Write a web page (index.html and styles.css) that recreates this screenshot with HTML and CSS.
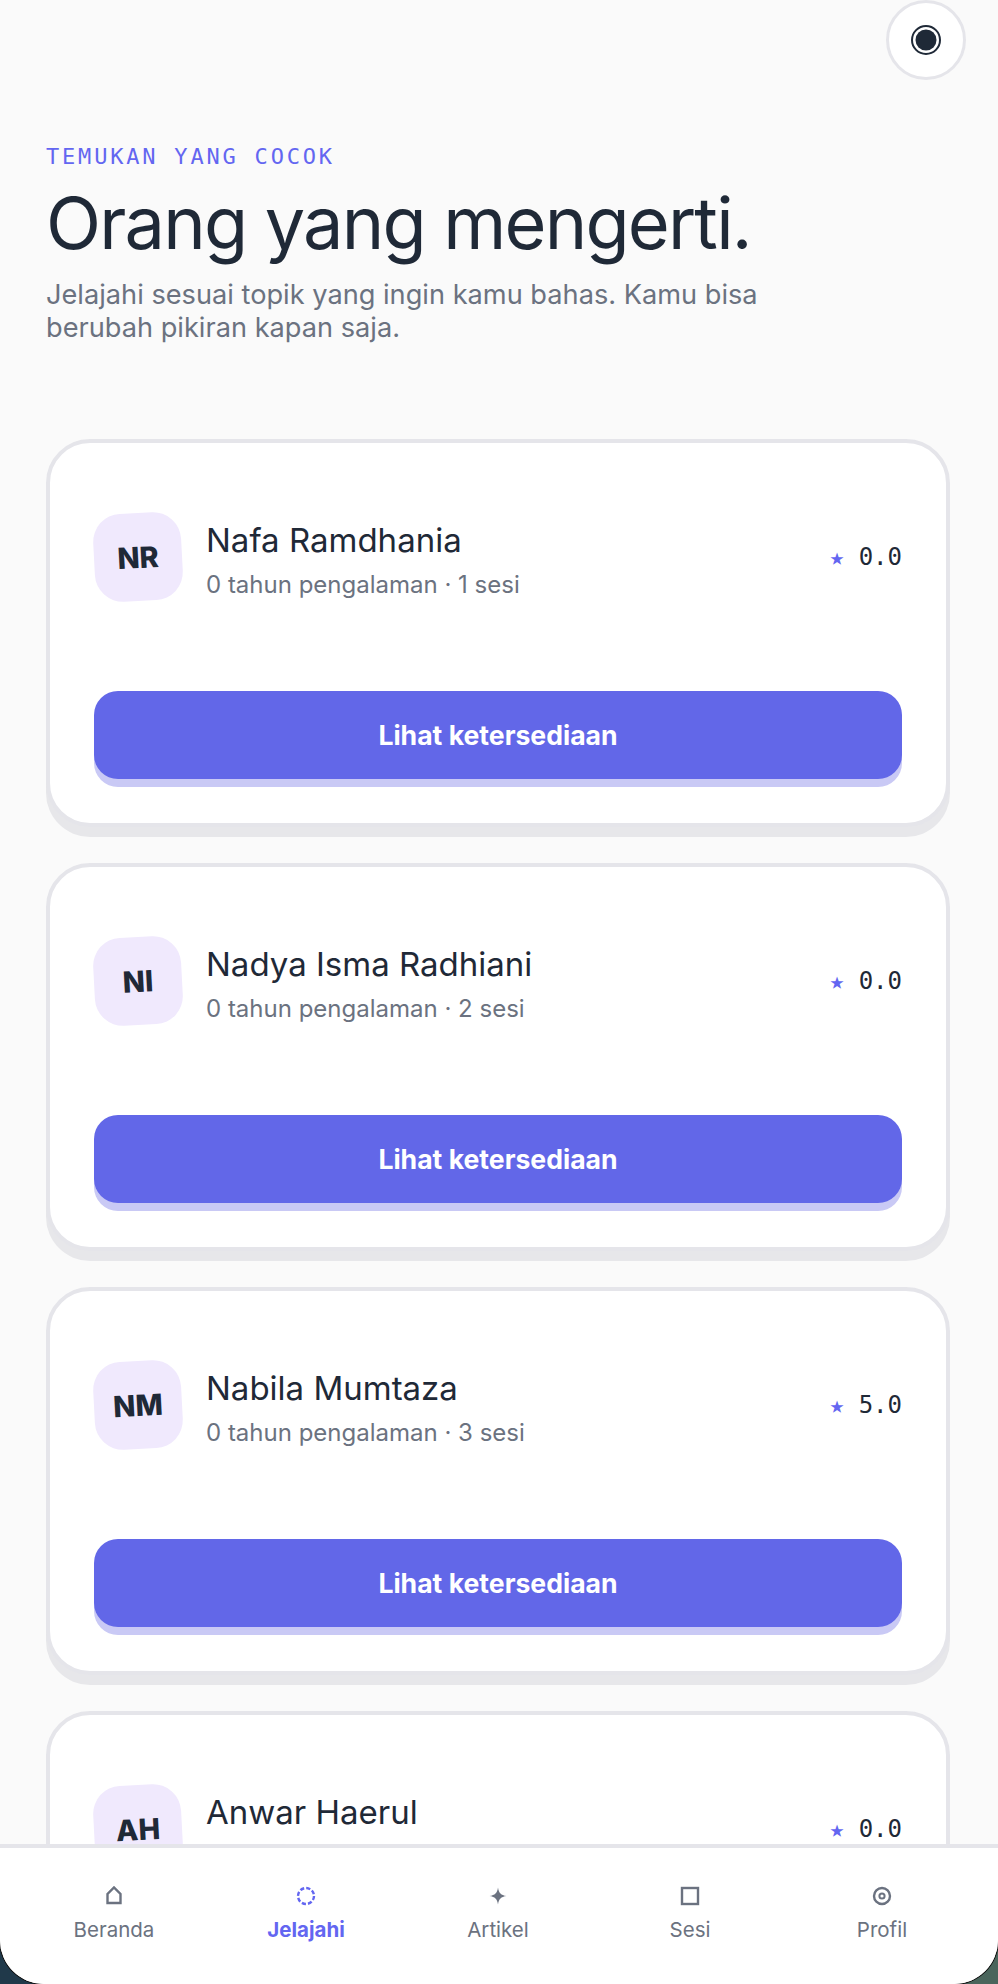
FILE: index.html

```html
<!DOCTYPE html>
<html lang="id">
<head>
  <meta charset="UTF-8">
  <meta name="viewport" content="width=device-width, initial-scale=1.0">
  <title>Jelajahi</title>
  <link rel="stylesheet" href="styles.css">
</head>
<body>
  <div class="screen">
    <button class="theme-btn" aria-label="Tema">
      <svg width="30" height="30" viewBox="0 0 30 30">
        <circle cx="15" cy="15" r="14" fill="none" stroke="#1f2937" stroke-width="2"></circle>
        <circle cx="15" cy="15" r="10.5" fill="#1f2937"></circle>
      </svg>
    </button>

    <main class="content">
      <header class="intro">
        <p class="eyebrow">TEMUKAN YANG COCOK</p>
        <h1>Orang yang mengerti.</h1>
        <p class="lead">Jelajahi sesuai topik yang ingin kamu bahas. Kamu bisa berubah pikiran kapan saja.</p>
      </header>

      <article class="card">
        <div class="card-top">
          <div class="avatar"><span>NR</span></div>
          <div class="info">
            <h2>Nafa Ramdhania</h2>
            <p>0 tahun pengalaman · 1 sesi</p>
          </div>
          <div class="rating"><span class="star">★</span> 0.0</div>
        </div>
        <button class="cta">Lihat ketersediaan</button>
      </article>

      <article class="card">
        <div class="card-top">
          <div class="avatar"><span>NI</span></div>
          <div class="info">
            <h2>Nadya Isma Radhiani</h2>
            <p>0 tahun pengalaman · 2 sesi</p>
          </div>
          <div class="rating"><span class="star">★</span> 0.0</div>
        </div>
        <button class="cta">Lihat ketersediaan</button>
      </article>

      <article class="card">
        <div class="card-top">
          <div class="avatar"><span>NM</span></div>
          <div class="info">
            <h2>Nabila Mumtaza</h2>
            <p>0 tahun pengalaman · 3 sesi</p>
          </div>
          <div class="rating"><span class="star">★</span> 5.0</div>
        </div>
        <button class="cta">Lihat ketersediaan</button>
      </article>

      <!-- this one runs under the tab bar, its second line is not visible -->
      <article class="card">
        <div class="card-top">
          <div class="avatar"><span>AH</span></div>
          <div class="info">
            <h2>Anwar Haerul</h2>
            <p>&nbsp;</p>
          </div>
          <div class="rating"><span class="star">★</span> 0.0</div>
        </div>
      </article>
    </main>

    <nav class="tabbar">
      <a class="tab">
        <svg width="24" height="24" viewBox="0 0 24 24"><path d="M5.500 19V10L12 3.500 18.500 10V19Z" fill="none" stroke="#6b7280" stroke-width="2.400"></path></svg>
        <span>Beranda</span>
      </a>
      <a class="tab active">
        <svg width="24" height="24" viewBox="0 0 24 24"><circle cx="12" cy="12" r="8" fill="none" stroke="#6366f1" stroke-width="2.400" stroke-dasharray="4.200 2.080"></circle></svg>
        <span>Jelajahi</span>
      </a>
      <a class="tab">
        <svg width="24" height="24" viewBox="0 0 24 24"><path d="M12 3.500C12.800 9 15 11.200 20.500 12 15 12.800 12.800 15 12 20.500 11.200 15 9 12.800 3.500 12 9 11.200 11.200 9 12 3.500Z" fill="#6b7280"></path></svg>
        <span>Artikel</span>
      </a>
      <a class="tab">
        <svg width="24" height="24" viewBox="0 0 24 24"><rect x="4" y="4" width="16" height="16" fill="none" stroke="#6b7280" stroke-width="2.400"></rect></svg>
        <span>Sesi</span>
      </a>
      <a class="tab">
        <svg width="24" height="24" viewBox="0 0 24 24"><circle cx="12" cy="12" r="8" fill="none" stroke="#6b7280" stroke-width="2.400"></circle><circle cx="12" cy="12" r="2.600" fill="none" stroke="#6b7280" stroke-width="2"></circle></svg>
        <span>Profil</span>
      </a>
    </nav>
  </div>
</body>
</html>
```

FILE: styles.css

```css
* {
  box-sizing: border-box;
}
html, body {
  margin: 0;
  height: 100%;
}
body {
  background: linear-gradient(90deg, #20394a 50%, #4a655c 50%);
  font-family: 'Inter', sans-serif;
  color: #1f2937;
  overflow: hidden;
}
.screen {
  position: relative;
  width: 998px;
  height: 1984px;
  display: flex;
  flex-direction: column;
  background-color: #fafafa;
  border-radius: 0 0 44px 44px;
  box-shadow: 0 0 0 1px #111;
  overflow: hidden;
}
.theme-btn {
  position: absolute;
  top: 0;
  right: 32px;
  width: 80px;
  height: 80px;
  display: flex;
  align-items: center;
  justify-content: center;
  padding: 0;
  background-color: #fff;
  border: 3px solid #e5e5ea;
  border-radius: 50%;
}
.content {
  flex: 1;
  min-height: 0;
  overflow: hidden;
  padding: 0 48px 0 46px;
}
.intro {
  padding-top: 143px;
  margin-bottom: 95px;
}
.eyebrow {
  margin: 0;
  font-family: 'DejaVu Sans Mono', monospace;
  font-size: 22px;
  line-height: 28px;
  letter-spacing: 2.8px;
  color: #6366f1;
}
h1 {
  margin: 8px 0 11px;
  font-size: 72px;
  line-height: 88px;
  font-weight: 400;
  letter-spacing: -1.8px;
}
.lead {
  margin: 0;
  max-width: 760px;
  font-size: 27.2px;
  line-height: 33px;
  color: #6b7280;
}
.card {
  height: 388px;
  margin-bottom: 36px;
  padding: 70px 44px 0;
  background-color: #fff;
  border: 4px solid #e5e5ea;
  border-radius: 44px;
  box-shadow: 0 10px 0 #e7e7ea;
}
.card-top {
  display: flex;
  align-items: center;
  gap: 24px;
  margin-bottom: 90px;
}
.avatar {
  flex: none;
  width: 88px;
  height: 88px;
  display: flex;
  align-items: center;
  justify-content: center;
  background-color: #f0e9fd;
  border-radius: 28px;
  transform: rotate(-3deg);
  font-size: 29px;
  font-weight: 800;
}
.info {
  flex: 1;
  padding-top: 5px;
}
.info h2 {
  margin: 0 0 10px;
  font-size: 33px;
  line-height: 40px;
  font-weight: 400;
}
.info p {
  margin: 0;
  font-size: 24px;
  line-height: 30px;
  color: #6b7280;
}
.rating {
  font-family: 'DejaVu Sans Mono', monospace;
  font-size: 24px;
}
.star {
  color: #6366f1;
  font-size: 24px;
  line-height: 1;
}
.cta {
  display: block;
  width: 100%;
  height: 88px;
  background-color: #6267e8;
  color: #fff;
  border: none;
  border-radius: 24px;
  box-shadow: 0 8px 0 #c9c9f5;
  font-family: inherit;
  font-size: 26.600px;
  font-weight: 700;
}
.tabbar {
  flex: none;
  height: 140px;
  display: flex;
  padding: 36px 20px 0 18px;
  background-color: #fff;
  border-top: 4px solid #e5e5ea;
}
.tab {
  flex: 1;
  display: flex;
  flex-direction: column;
  align-items: center;
  gap: 9px;
  font-size: 20.500px;
  color: #6b7280;
}
.tab.active {
  color: #6366f1;
  font-weight: 700;
}
```
